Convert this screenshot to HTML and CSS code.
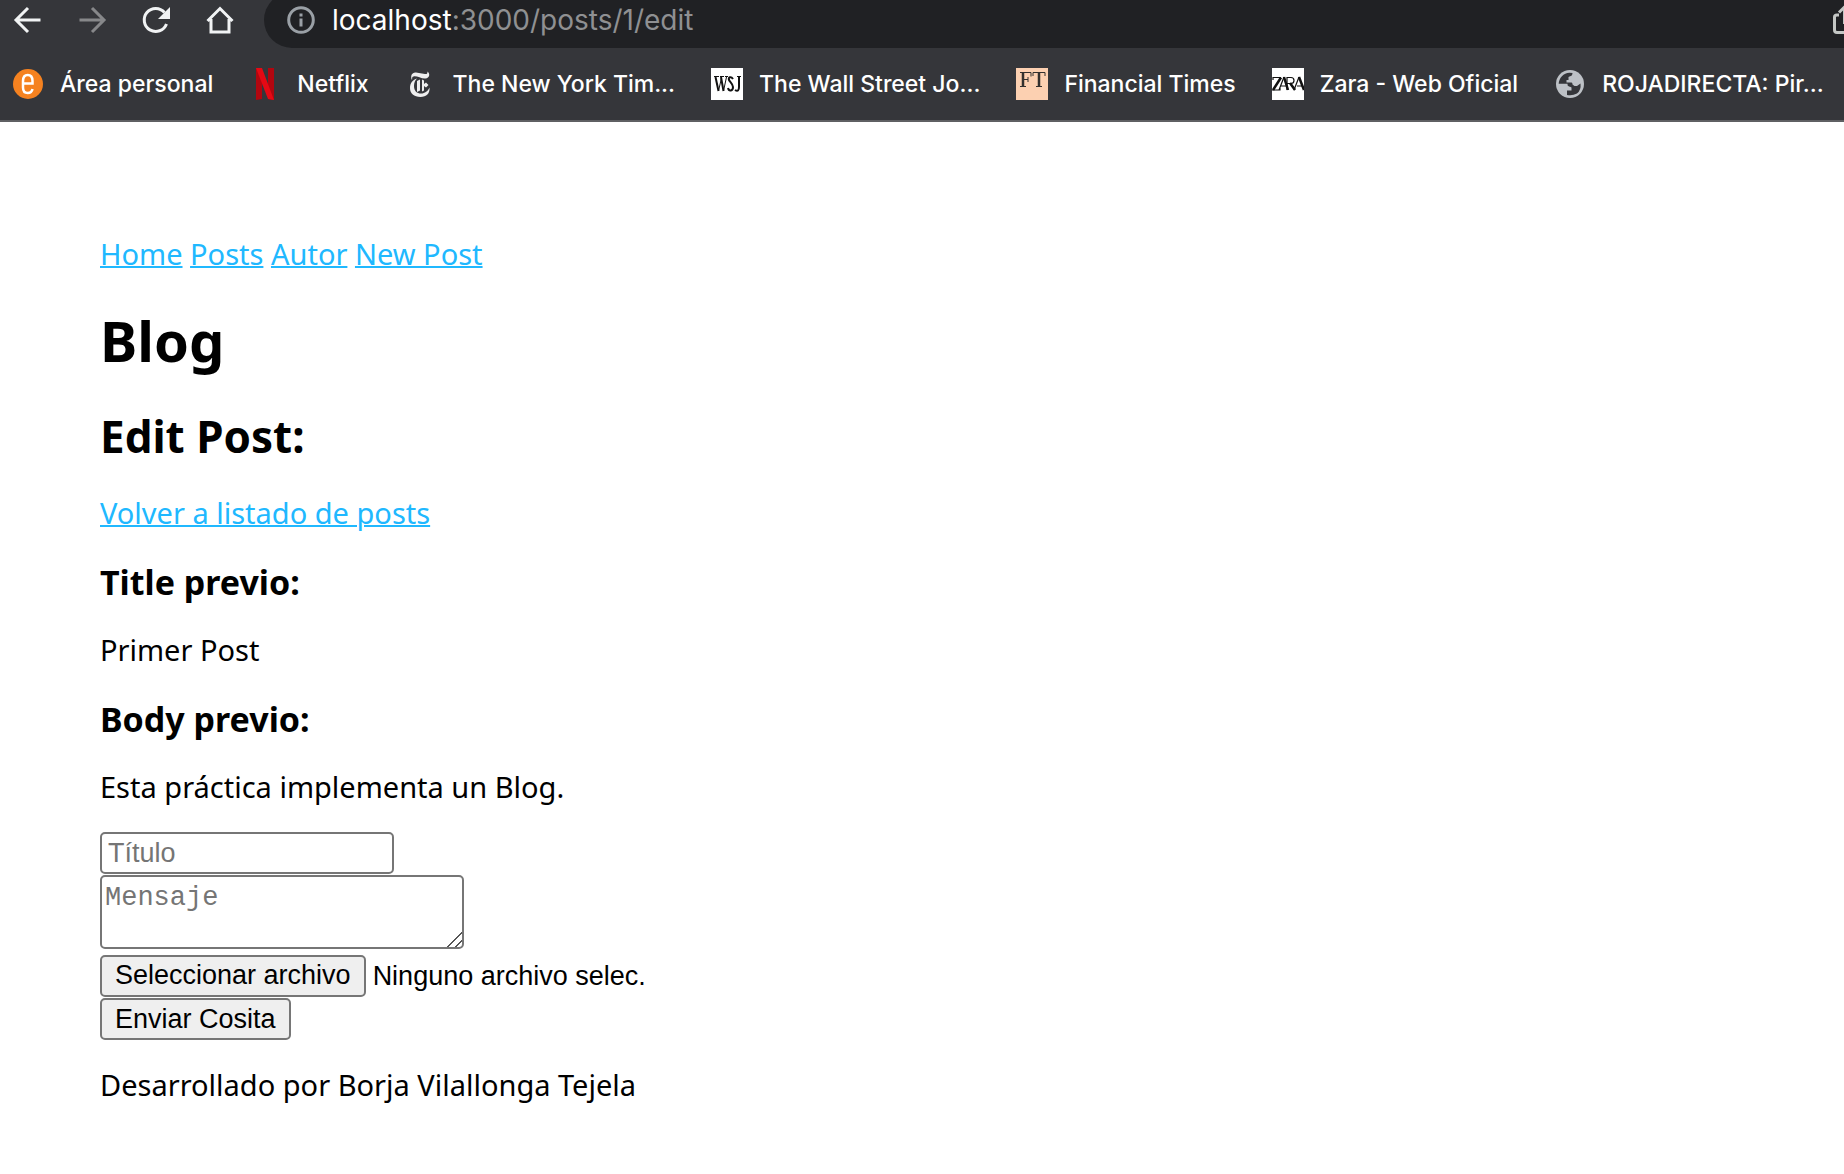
FILE: index.html
```html
<!DOCTYPE html>
<html lang="es">
<head>
<meta charset="utf-8">
<title>Blog</title>
<link rel="stylesheet" href="styles.css">
</head>
<body>
<header class="browser">
  <div class="toolbar">
    <button class="tool" aria-label="Atrás"><svg viewBox="0 0 32 32"><path d="M28.500 16H4M16 4L4 16l12 12"/></svg></button>
    <button class="tool tool-off" aria-label="Adelante" disabled><svg viewBox="0 0 32 32"><path d="M3.500 16H28M16 4l12 12-12 12"/></svg></button>
    <button class="tool" aria-label="Recargar"><svg viewBox="0 0 32 32"><path d="M26.500 20A11.500 11.500 0 1 1 24.500 8.500"/><path class="solid" d="M30 3v12H18z"/></svg></button>
    <button class="tool" aria-label="Inicio"><svg viewBox="0 0 32 32"><path d="M3.500 17L16 4.500 28.500 17M7 15v13h18V15"/></svg></button>
    <div class="address">
      <svg class="info" viewBox="0 0 28 28"><circle cx="14" cy="14" r="12.300"/><path d="M14 12.500v8M14 7.500v3"/></svg>
      <span class="url"><span class="host">localhost</span>:3000/posts/1/edit</span>
      <svg class="share" viewBox="0 0 28 32"><path d="M7 11H5Q2.500 11 2.500 13v13Q2.500 28.500 5 28.500h15q2.500 0 2.500-2.500V13q0-2-2.500-2h-2M12.500 20V4M7 8.500L12.500 3 18 8.500"/></svg>
    </div>
  </div>
  <nav class="bookmarks" aria-label="Marcadores">
    <a href="#"><svg viewBox="0 0 32 32"><circle cx="16" cy="16" r="15" fill="#f58220"/><path d="M11 15.500h9.500V13q0-6-4.750-6T11 13v6.500q0 5.500 4.750 5.500 4 0 4.750-4" fill="none" stroke="#fff" stroke-width="2.500"/></svg>Área personal</a>
    <a href="#"><svg viewBox="0 0 32 32"><path d="M7 0h6v31l-6 1zM19 0h6v32l-6-1z" fill="#b1060f"/><path d="M7 0h6l12 32-6-1z" fill="#e50914"/></svg>Netflix</a>
    <a href="#"><svg viewBox="0 0 32 32"><g transform="translate(-3)"><path d="M10 12C8 8 10 4 14 4.500l9 1.500c2 .3 2.500-.5 2.500-2.500 3 2.500 2 6.500-2 7-4 .500-9-3-12-2-2 .5-1 2-1.500 3.500zM15 10.500c-2 2-3 4-3 7.500 0 5 3 7.500 7 7.500s7-2.500 8.500-6c.5 6-3 9.500-9 9.500-6.500 0-10.500-3.500-10.500-9 0-5 3-8.500 7-9.500zM15 13l3-1.500v11L15 24zM20 11.500l2 1v3.500l2-1.500 2.500 2.500-2.500 2.500-2-1.500v4.500l-2 1z" fill="#eee"/></g></svg>The New York Tim...</a>
    <a href="#"><svg viewBox="0 0 32 32"><path fill="#fff" d="M0 0h32v32H0z"/><path d="M3 8.500h5M9 8.500h4M14 8.500h3M26 8.500h4" stroke="#111" fill="none"/><path d="M4.500 9l3 14M10 9l2.500 14M24 22c3 2 4 0 4-3V9M22 11c-2-3-5-2-4 1 1 2 4 4 4 7 0 4-4 5-5 1" stroke="#111" stroke-width="2" fill="none"/><path d="M7.500 23L10.500 10M12.500 23L15.500 9" stroke="#111" fill="none"/></svg>The Wall Street Jo...</a>
    <a href="#"><svg viewBox="0 0 32 32"><path fill="#fcd0b1" d="M0 0h32v32H0z"/><path d="M4 4.500h11v4M4 18.500h6M7 11.500h5M12 9v5M17 8V4.500h12V8M20 18.500h6" stroke="#33302e" fill="none"/><path d="M7 5v13M23 5v13" stroke="#33302e" stroke-width="2.500"/></svg>Financial Times</a>
    <a href="#"><svg viewBox="0 0 32 32"><path fill="#fff" d="M0 0h32v32H0z"/><path d="M1 12V9.500h8M0 22h8v-3M7 22l5-13M9 18h5M15 22V9.500h4q3 0 3 3t-3 3h-4M22 22l5-13M25 18h5" stroke="#111" stroke-width="1.200" fill="none"/><path d="M9 9.500L1 22M12 9l4 13M18 15l5 7M27 9l5 13" stroke="#111" stroke-width="2.500" fill="none"/></svg>Zara - Web Oficial</a>
    <a href="#"><svg viewBox="0 0 32 32"><circle cx="16" cy="16" r="14" fill="#bdc1c6"/><path d="M4.700 15.700C5 10 9.500 5 15.500 4.700L18.500 5Q18.500 8 15.500 8.500L14.500 9v3h-2v2.500h5q1 0 1 2l2 1.500h2.500l3.500-2.500Q27.300 22 23 25.500 18.500 28 13 27v-4.500h4.500v-3Q17 19 15 18.500T13.500 15.700z" fill="#35363a"/></svg>ROJADIRECTA: Pir...</a>
  </nav>
</header>
<main class="page">
  <nav class="menu"><a href="#">Home</a> <a href="#">Posts</a> <a href="#">Autor</a> <a href="#">New Post</a></nav>
  <h1>Blog</h1>
  <h2>Edit Post:</h2>
  <a href="#">Volver a listado de posts</a>
  <h3>Title previo:</h3>
  <p>Primer Post</p>
  <h3>Body previo:</h3>
  <p>Esta práctica implementa un Blog.</p>
  <form class="form">
    <input class="title" type="text" placeholder="Título" aria-label="Título">
    <textarea class="message" placeholder="Mensaje" aria-label="Mensaje"></textarea>
    <div class="file">
      <input class="file-input" type="file" id="archivo">
      <label class="button" for="archivo">Seleccionar archivo</label>
      <span>Ninguno archivo selec.</span>
    </div>
    <button class="button" type="submit">Enviar Cosita</button>
  </form>
  <footer>Desarrollado por Borja Vilallonga Tejela</footer>
</main>
</body>
</html>
```
FILE: styles.css
```css
* { box-sizing: border-box; }

body {
  margin: 0;
  background: #fff;
  color: #000;
  font: 29px/34px "Lucida Grande", "Noto Sans", sans-serif;
}

a { color: #20b8ff; text-decoration-thickness: 2px; }

/* Browser bar */
.browser {
  background: #35363a;
  border-bottom: 2px solid #5f6063;
  color: #fff;
  font-family: Inter, sans-serif;
}

.toolbar { display: flex; height: 48px; padding-left: 12px; overflow: hidden; }

.tool {
  flex: none;
  width: 32px;
  height: 32px;
  margin: 4px 32px 0 0;
  padding: 0;
  border: 0;
  background: none;
  color: #f1f3f4;
}

.tool-off { color: #87888a; }
.tool svg { display: block; width: 32px; height: 32px; }
.tool path, .info, .share { fill: none; stroke: currentColor; stroke-width: 3; }
.tool .solid { fill: currentColor; stroke: none; }

.address {
  display: flex;
  flex: 1;
  align-items: center;
  height: 56px;
  margin: -8px -16px 0 -4px;
  padding-left: 23px;
  border-radius: 28px 0 0 28px;
  background: #202124;
}

.info { width: 28px; height: 28px; margin-right: 17px; color: #9aa0a6; }
.url { flex: 1; color: #8f9092; font-size: 28px; }
.host { color: #fff; }
.share { width: 28px; height: 32px; color: #c4c7c5; }

.bookmarks {
  display: flex;
  gap: 36px;
  height: 72px;
  padding-left: 12px;
  overflow: hidden;
}

.bookmarks a {
  display: flex;
  flex: none;
  align-items: center;
  gap: 16px;
  color: #fff;
  font-size: 23px;
  font-weight: 500;
  text-decoration: none;
}

.bookmarks svg { width: 32px; height: 32px; }

/* Page */
.page { padding: 115px 100px 71px; }

h1, h2, h3, p { margin: 0; }
h1 { margin: 36px 0 38px; font-size: 56px; line-height: 66px; }
h2 { margin: 38px 0 35px; font-size: 44px; line-height: 50px; }
h3 { margin: 32px 0 31px; font-size: 34px; line-height: 40px; }
p, footer { margin: 28px 0; }

.form {
  display: flex;
  flex-direction: column;
  align-items: flex-start;
  gap: 1px;
  font: 27px/36px "Liberation Sans", Arial, sans-serif;
}

.title, .message, .button {
  border: 2px solid #767676;
  border-radius: 5px;
  background: #fff;
  color: #000;
  font: inherit;
}

.title { width: 294px; height: 42px; padding: 2px 6px; }
.message {
  width: 364px;
  height: 74px;
  margin-bottom: 5px;
  padding: 6px 3px;
  font-family: "Liberation Mono", "Courier New", monospace;
  line-height: 30px;
}
.message::-webkit-resizer {
  background: linear-gradient(135deg, transparent 49%, #555 49%, #555 54%, transparent 54%, transparent 76%, #555 76%, #555 81%, transparent 81%);
}
::placeholder { color: #757575; }

.button { height: 42px; padding: 0 13px; background: #efefef; }
.file { display: flex; align-items: center; gap: 7px; }
.file-input { position: absolute; width: 1px; height: 1px; opacity: 0; }
```
